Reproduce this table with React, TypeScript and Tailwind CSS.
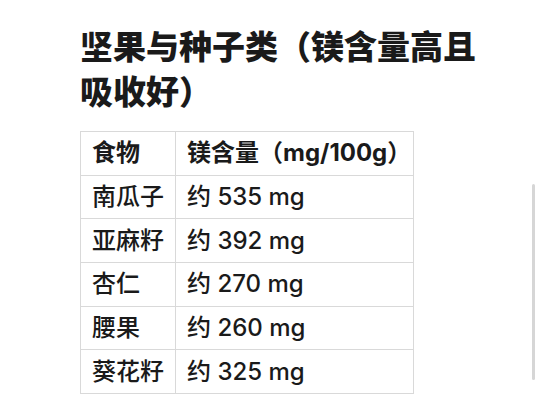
const rows = [
  { food: "南瓜子", amount: "约 535 mg" },
  { food: "亚麻籽", amount: "约 392 mg" },
  { food: "杏仁", amount: "约 270 mg" },
  { food: "腰果", amount: "约 260 mg" },
  { food: "葵花籽", amount: "约 325 mg" },
];

export default function App() {
  return (
    <div className="relative h-[415px] w-[540px] overflow-hidden bg-white text-[#1a1a1a]">
      <div className="pl-[80px] pr-[20px] pt-[25px] font-['Inter','Noto_Sans_CJK_SC',sans-serif]">
        <h1 className="max-w-[410px] text-[33px] leading-[45px] font-black">
          坚果与种子类（镁含量高且吸收好）
        </h1>
        <table className="mt-[16px] border-collapse text-[24px]">
          <thead>
            <tr>
              <th className="h-[43.7px] border border-[#d9d9d9] px-[11px] text-left font-bold">
                食物
              </th>
              <th className="h-[43.7px] border border-[#d9d9d9] pl-[11px] pr-[2px] text-left font-bold">
                镁含量（mg/100g）
              </th>
            </tr>
          </thead>
          <tbody>
            {rows.map((r) => (
              <tr key={r.food}>
                <td className="h-[43.7px] border border-[#d9d9d9] px-[11px] font-medium">
                  {r.food}
                </td>
                <td className="h-[43.7px] border border-[#d9d9d9] pl-[11px] pr-[2px] font-medium">
                  {r.amount}
                </td>
              </tr>
            ))}
          </tbody>
        </table>
      </div>
      {/* scroll indicator */}
      <div className="absolute left-[532px] top-[184px] h-[196px] w-[3px] rounded-full bg-[#d6d6d6]" />
    </div>
  );
}
